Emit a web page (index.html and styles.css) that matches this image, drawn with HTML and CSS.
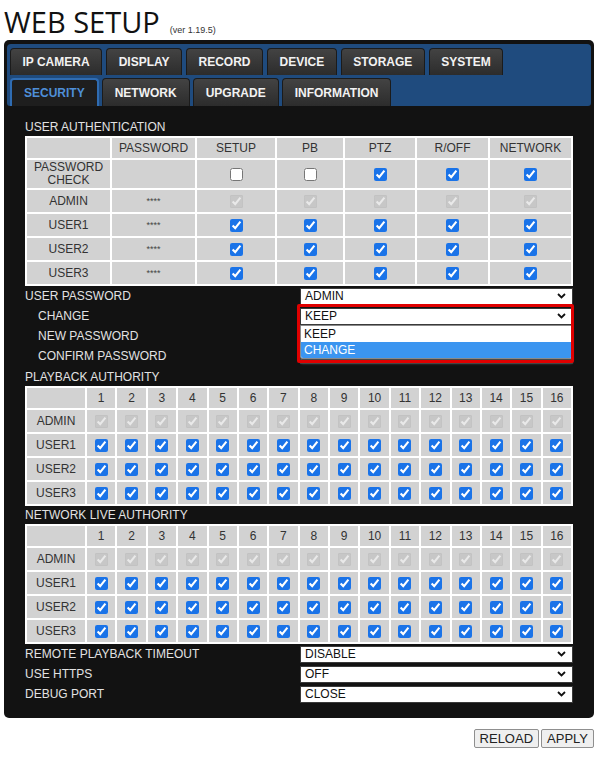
FILE: index.html
```html
<!DOCTYPE html>
<html>
<head>
<meta charset="utf-8">
<title>WEB SETUP</title>
<link rel="stylesheet" href="styles.css">
</head>
<body>
<div class="page">
  <h1 class="title">WEB SETUP<span class="ver">(ver 1.19.5)</span></h1>
  <div class="panel">
    <nav class="tabs">
      <div class="tab-row tab-row-top">
        <div class="tab">IP CAMERA</div>
        <div class="tab">DISPLAY</div>
        <div class="tab">RECORD</div>
        <div class="tab">DEVICE</div>
        <div class="tab">STORAGE</div>
        <div class="tab">SYSTEM</div>
      </div>
      <div class="tab-row tab-row-bottom">
        <div class="tab active">SECURITY</div>
        <div class="tab">NETWORK</div>
        <div class="tab">UPGRADE</div>
        <div class="tab">INFORMATION</div>
      </div>
    </nav>
    <div class="content">
      <div class="section-title">USER AUTHENTICATION</div>
      <table class="grid auth">
        <tr class="head">
          <th class="c-label"></th>
          <th class="c-pw">PASSWORD</th>
          <th class="c-setup">SETUP</th>
          <th class="c-pb">PB</th>
          <th class="c-ptz">PTZ</th>
          <th class="c-roff">R/OFF</th>
          <th class="c-net">NETWORK</th>
        </tr>
        <tr class="tall">
          <td>PASSWORD<br>CHECK</td>
          <td></td>
          <td><input type="checkbox"></td>
          <td><input type="checkbox"></td>
          <td><input type="checkbox" checked></td>
          <td><input type="checkbox" checked></td>
          <td><input type="checkbox" checked></td>
        </tr>
        <tr>
          <td>ADMIN</td>
          <td class="stars">****</td>
          <td><input type="checkbox" checked disabled></td>
          <td><input type="checkbox" checked disabled></td>
          <td><input type="checkbox" checked disabled></td>
          <td><input type="checkbox" checked disabled></td>
          <td><input type="checkbox" checked disabled></td>
        </tr>
        <tr>
          <td>USER1</td>
          <td class="stars">****</td>
          <td><input type="checkbox" checked></td>
          <td><input type="checkbox" checked></td>
          <td><input type="checkbox" checked></td>
          <td><input type="checkbox" checked></td>
          <td><input type="checkbox" checked></td>
        </tr>
        <tr>
          <td>USER2</td>
          <td class="stars">****</td>
          <td><input type="checkbox" checked></td>
          <td><input type="checkbox" checked></td>
          <td><input type="checkbox" checked></td>
          <td><input type="checkbox" checked></td>
          <td><input type="checkbox" checked></td>
        </tr>
        <tr>
          <td>USER3</td>
          <td class="stars">****</td>
          <td><input type="checkbox" checked></td>
          <td><input type="checkbox" checked></td>
          <td><input type="checkbox" checked></td>
          <td><input type="checkbox" checked></td>
          <td><input type="checkbox" checked></td>
        </tr>
      </table>

      <div class="pw-block">
        <div class="row">
          <span class="label">USER PASSWORD</span>
          <div class="select"><span>ADMIN</span><svg class="chev" width="9" height="6" viewBox="0 0 9 6"><path d="M1 1L4.5 4.5L8 1" fill="none" stroke="#111" stroke-width="1.8"/></svg></div>
        </div>
        <div class="row">
          <span class="label sub">CHANGE</span>
          <div class="select-wrap">
            <div class="select"><span>KEEP</span><svg class="chev" width="9" height="6" viewBox="0 0 9 6"><path d="M1 1L4.5 4.5L8 1" fill="none" stroke="#111" stroke-width="1.8"/></svg></div>
            <div class="dd-list">
              <div class="dd-opt">KEEP</div>
              <div class="dd-opt selected">CHANGE</div>
            </div>
            <div class="dd-frame"></div>
          </div>
        </div>
        <div class="row">
          <span class="label sub">NEW PASSWORD</span>
          <input class="text-input" type="password">
        </div>
        <div class="row">
          <span class="label sub">CONFIRM PASSWORD</span>
          <input class="text-input" type="password">
        </div>
      </div>

      <div class="section-title">PLAYBACK AUTHORITY</div>
      <table class="grid ch">
        <tr class="head">
          <th class="c-first"></th><th>1</th><th>2</th><th>3</th><th>4</th><th>5</th><th>6</th><th>7</th><th>8</th><th>9</th><th>10</th><th>11</th><th>12</th><th>13</th><th>14</th><th>15</th><th>16</th>
        </tr>
        <tr>
          <td>ADMIN</td>
          <td><input type="checkbox" checked disabled></td><td><input type="checkbox" checked disabled></td><td><input type="checkbox" checked disabled></td><td><input type="checkbox" checked disabled></td><td><input type="checkbox" checked disabled></td><td><input type="checkbox" checked disabled></td><td><input type="checkbox" checked disabled></td><td><input type="checkbox" checked disabled></td><td><input type="checkbox" checked disabled></td><td><input type="checkbox" checked disabled></td><td><input type="checkbox" checked disabled></td><td><input type="checkbox" checked disabled></td><td><input type="checkbox" checked disabled></td><td><input type="checkbox" checked disabled></td><td><input type="checkbox" checked disabled></td><td><input type="checkbox" checked disabled></td>
        </tr>
        <tr>
          <td>USER1</td>
          <td><input type="checkbox" checked></td><td><input type="checkbox" checked></td><td><input type="checkbox" checked></td><td><input type="checkbox" checked></td><td><input type="checkbox" checked></td><td><input type="checkbox" checked></td><td><input type="checkbox" checked></td><td><input type="checkbox" checked></td><td><input type="checkbox" checked></td><td><input type="checkbox" checked></td><td><input type="checkbox" checked></td><td><input type="checkbox" checked></td><td><input type="checkbox" checked></td><td><input type="checkbox" checked></td><td><input type="checkbox" checked></td><td><input type="checkbox" checked></td>
        </tr>
        <tr>
          <td>USER2</td>
          <td><input type="checkbox" checked></td><td><input type="checkbox" checked></td><td><input type="checkbox" checked></td><td><input type="checkbox" checked></td><td><input type="checkbox" checked></td><td><input type="checkbox" checked></td><td><input type="checkbox" checked></td><td><input type="checkbox" checked></td><td><input type="checkbox" checked></td><td><input type="checkbox" checked></td><td><input type="checkbox" checked></td><td><input type="checkbox" checked></td><td><input type="checkbox" checked></td><td><input type="checkbox" checked></td><td><input type="checkbox" checked></td><td><input type="checkbox" checked></td>
        </tr>
        <tr>
          <td>USER3</td>
          <td><input type="checkbox" checked></td><td><input type="checkbox" checked></td><td><input type="checkbox" checked></td><td><input type="checkbox" checked></td><td><input type="checkbox" checked></td><td><input type="checkbox" checked></td><td><input type="checkbox" checked></td><td><input type="checkbox" checked></td><td><input type="checkbox" checked></td><td><input type="checkbox" checked></td><td><input type="checkbox" checked></td><td><input type="checkbox" checked></td><td><input type="checkbox" checked></td><td><input type="checkbox" checked></td><td><input type="checkbox" checked></td><td><input type="checkbox" checked></td>
        </tr>
      </table>

      <div class="section-title">NETWORK LIVE AUTHORITY</div>
      <table class="grid ch">
        <tr class="head">
          <th class="c-first"></th><th>1</th><th>2</th><th>3</th><th>4</th><th>5</th><th>6</th><th>7</th><th>8</th><th>9</th><th>10</th><th>11</th><th>12</th><th>13</th><th>14</th><th>15</th><th>16</th>
        </tr>
        <tr>
          <td>ADMIN</td>
          <td><input type="checkbox" checked disabled></td><td><input type="checkbox" checked disabled></td><td><input type="checkbox" checked disabled></td><td><input type="checkbox" checked disabled></td><td><input type="checkbox" checked disabled></td><td><input type="checkbox" checked disabled></td><td><input type="checkbox" checked disabled></td><td><input type="checkbox" checked disabled></td><td><input type="checkbox" checked disabled></td><td><input type="checkbox" checked disabled></td><td><input type="checkbox" checked disabled></td><td><input type="checkbox" checked disabled></td><td><input type="checkbox" checked disabled></td><td><input type="checkbox" checked disabled></td><td><input type="checkbox" checked disabled></td><td><input type="checkbox" checked disabled></td>
        </tr>
        <tr>
          <td>USER1</td>
          <td><input type="checkbox" checked></td><td><input type="checkbox" checked></td><td><input type="checkbox" checked></td><td><input type="checkbox" checked></td><td><input type="checkbox" checked></td><td><input type="checkbox" checked></td><td><input type="checkbox" checked></td><td><input type="checkbox" checked></td><td><input type="checkbox" checked></td><td><input type="checkbox" checked></td><td><input type="checkbox" checked></td><td><input type="checkbox" checked></td><td><input type="checkbox" checked></td><td><input type="checkbox" checked></td><td><input type="checkbox" checked></td><td><input type="checkbox" checked></td>
        </tr>
        <tr>
          <td>USER2</td>
          <td><input type="checkbox" checked></td><td><input type="checkbox" checked></td><td><input type="checkbox" checked></td><td><input type="checkbox" checked></td><td><input type="checkbox" checked></td><td><input type="checkbox" checked></td><td><input type="checkbox" checked></td><td><input type="checkbox" checked></td><td><input type="checkbox" checked></td><td><input type="checkbox" checked></td><td><input type="checkbox" checked></td><td><input type="checkbox" checked></td><td><input type="checkbox" checked></td><td><input type="checkbox" checked></td><td><input type="checkbox" checked></td><td><input type="checkbox" checked></td>
        </tr>
        <tr>
          <td>USER3</td>
          <td><input type="checkbox" checked></td><td><input type="checkbox" checked></td><td><input type="checkbox" checked></td><td><input type="checkbox" checked></td><td><input type="checkbox" checked></td><td><input type="checkbox" checked></td><td><input type="checkbox" checked></td><td><input type="checkbox" checked></td><td><input type="checkbox" checked></td><td><input type="checkbox" checked></td><td><input type="checkbox" checked></td><td><input type="checkbox" checked></td><td><input type="checkbox" checked></td><td><input type="checkbox" checked></td><td><input type="checkbox" checked></td><td><input type="checkbox" checked></td>
        </tr>
      </table>

      <div class="opts">
        <div class="row">
          <span class="label">REMOTE PLAYBACK TIMEOUT</span>
          <div class="select"><span>DISABLE</span><svg class="chev" width="9" height="6" viewBox="0 0 9 6"><path d="M1 1L4.5 4.5L8 1" fill="none" stroke="#111" stroke-width="1.8"/></svg></div>
        </div>
        <div class="row">
          <span class="label">USE HTTPS</span>
          <div class="select"><span>OFF</span><svg class="chev" width="9" height="6" viewBox="0 0 9 6"><path d="M1 1L4.5 4.5L8 1" fill="none" stroke="#111" stroke-width="1.8"/></svg></div>
        </div>
        <div class="row">
          <span class="label">DEBUG PORT</span>
          <div class="select"><span>CLOSE</span><svg class="chev" width="9" height="6" viewBox="0 0 9 6"><path d="M1 1L4.5 4.5L8 1" fill="none" stroke="#111" stroke-width="1.8"/></svg></div>
        </div>
      </div>
    </div>
  </div>
  <div class="actions">
    <button class="btn" type="button">RELOAD</button>
    <button class="btn" type="button">APPLY</button>
  </div>
</div>
</body>
</html>
```
FILE: styles.css
```css
* { box-sizing: border-box; }

html, body {
  margin: 0;
  padding: 0;
  background: #ffffff;
}

body {
  font-family: "Liberation Sans", Arial, sans-serif;
  font-size: 12px;
  color: #222;
}

.page {
  width: 594px;
  padding-left: 4px;
}

.title {
  margin: 4px 0 0 0;
  height: 36px;
  line-height: 36px;
  font-family: "Open Sans", "DejaVu Sans", sans-serif;
  font-size: 29px;
  font-weight: 400;
  color: #111;
  white-space: nowrap;
}

.ver {
  font-family: "Liberation Sans", Arial, sans-serif;
  font-size: 9px;
  color: #333;
  margin-left: 10px;
}

.panel {
  width: 590px;
  background: #121212;
  border-radius: 5px;
  padding: 4px 3px;
}

.tabs {
  background: #1f4b7e;
  border-radius: 4px 4px 3px 3px;
  padding: 4px 3px 0 3px;
  display: flex;
  flex-direction: column;
  gap: 3px;
}

.tab-row {
  display: flex;
  gap: 4px;
}

.tab-row-bottom {
  gap: 3px;
}

.tab {
  display: flex;
  align-items: center;
  justify-content: center;
  padding: 0 11.5px;
  color: #f2f2f2;
  font-weight: bold;
  font-size: 12px;
  background: linear-gradient(#434343, #2c2c2c);
  border: 1px solid #1b1b1b;
  border-bottom: none;
  border-radius: 4px 4px 0 0;
  white-space: nowrap;
}

.tab-row-top .tab {
  height: 27px;
}

.tab-row-bottom .tab {
  height: 28px;
  padding: 0 12px;
}

.tab.active {
  background: #1e1e1e;
  border: 2px solid #2f6cb2;
  border-bottom: none;
  color: #4e8fd8;
}

.content {
  padding: 12px 18px 10px 18px;
}

.section-title {
  height: 18px;
  line-height: 18px;
  color: #e2e2e2;
  font-size: 12px;
}

.grid {
  width: 548px;
  table-layout: fixed;
  border-collapse: separate;
  border-spacing: 2px;
  background: #ffffff;
}

.grid th,
.grid td {
  background: #d2d2d2;
  color: #333;
  font-size: 12px;
  font-weight: normal;
  text-align: center;
  vertical-align: middle;
  padding: 0;
  height: 22px;
  line-height: 13px;
}

.grid .head th {
  height: 20px;
}

.grid .tall td {
  height: 28px;
}

.grid input {
  margin: 0;
  width: 13px;
  height: 13px;
  vertical-align: middle;
  accent-color: #1a73e8;
}

.grid .stars {
  font-size: 9px;
  color: #444;
}

.auth .c-label { width: 83px; }
.auth .c-pw { width: 83px; }
.auth .c-setup { width: 78px; }
.auth .c-pb { width: 66px; }
.auth .c-ptz { width: 70px; }
.auth .c-roff { width: 71px; }
.auth .c-net { width: 81px; }

.ch .c-first { width: 58px; }

.pw-block {
  margin-bottom: 2px;
}

.row {
  display: flex;
  align-items: center;
  justify-content: space-between;
  height: 20px;
}

.label {
  color: #e2e2e2;
  font-size: 12px;
}

.label.sub {
  padding-left: 13px;
}

.select {
  width: 273px;
  height: 17px;
  background: #ffffff;
  border: 1px solid #3a3a3a;
  display: flex;
  align-items: center;
  justify-content: space-between;
  padding: 0 6px 0 4px;
  font-size: 12px;
  color: #111;
}

.chev {
  display: block;
}

.select-wrap {
  position: relative;
  width: 273px;
}

.dd-list {
  position: absolute;
  left: 0;
  right: 0;
  top: 17px;
  z-index: 2;
  background: #ffffff;
  border: 1px solid #8a8a8a;
  border-radius: 0 0 3px 3px;
  box-shadow: 0 5px 2px #4a4a4a;
  overflow: hidden;
}

.dd-opt {
  height: 16px;
  line-height: 16px;
  padding-left: 3px;
  font-size: 12px;
  color: #111;
}

.dd-opt.selected {
  background: #3b95f0;
  color: #ffffff;
}

.dd-frame {
  position: absolute;
  left: -3px;
  top: -4px;
  width: 277px;
  height: 59px;
  border: 3px solid #e00000;
  border-radius: 2px;
  z-index: 3;
}

.text-input {
  width: 273px;
  height: 16px;
  border: 1px solid #3a3a3a;
  background: #ffffff;
  padding: 0;
  margin: 0;
}

.actions {
  width: 590px;
  margin-top: 11px;
  display: flex;
  justify-content: flex-end;
  gap: 2px;
}

.btn {
  height: 19px;
  padding: 0 5px;
  font-family: "Liberation Sans", Arial, sans-serif;
  font-size: 13px;
  color: #222;
  background: #efefef;
  border: 1px solid #8f8f8f;
  border-radius: 2px;
  line-height: 17px;
}
```
